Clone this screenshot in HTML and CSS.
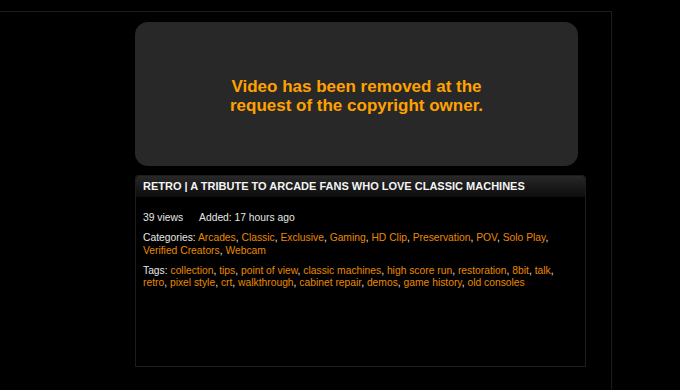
FILE: index.html
```html
<!DOCTYPE html>
<html>
<head>
<meta charset="utf-8">
<link rel="stylesheet" href="styles.css">
</head>
<body>
<div class="wrap">
  <div class="player">
    <p class="removed">Video has been removed at the<br>request of the copyright owner.</p>
  </div>
  <div class="panel">
    <div class="panel-head">RETRO | A TRIBUTE TO ARCADE FANS WHO LOVE CLASSIC MACHINES</div>
    <div class="panel-body">
      <p class="meta"><span>39 views</span><span>Added: 17 hours ago</span></p>
      <p class="line">Categories: <a href="#">Arcades</a>, <a href="#">Classic</a>, <a href="#">Exclusive</a>, <a href="#">Gaming</a>, <a href="#">HD Clip</a>, <a href="#">Preservation</a>, <a href="#">POV</a>, <a href="#">Solo Play</a>, <a href="#">Verified Creators</a>, <a href="#">Webcam</a></p>
      <p class="line">Tags: <a href="#">collection</a>, <a href="#">tips</a>, <a href="#">point of view</a>, <a href="#">classic machines</a>, <a href="#">high score run</a>, <a href="#">restoration</a>, <a href="#">8bit</a>, <a href="#">talk</a>, <a href="#">retro</a>, <a href="#">pixel style</a>, <a href="#">crt</a>, <a href="#">walkthrough</a>, <a href="#">cabinet repair</a>, <a href="#">demos</a>, <a href="#">game history</a>, <a href="#">old consoles</a></p>
    </div>
  </div>
</div>
</body>
</html>
```

FILE: styles.css
```css
html, body {
  margin: 0;
  padding: 0;
  background: #000;
}
body {
  height: 390px;
  font-family: "Liberation Sans", Arial, sans-serif;
  overflow: hidden;
}
.wrap {
  margin-top: 11px;
  width: 476px;
  height: 368px;
  padding: 10px 0 0 135px;
  border-top: 1px solid #1c1c1c;
  border-right: 1px solid #1c1c1c;
  display: flex;
  flex-direction: column;
  gap: 9px;
}
.player {
  width: 443px;
  height: 144px;
  flex: none;
  background: #282828;
  border-radius: 13px;
  display: flex;
  align-items: center;
  justify-content: center;
}
.removed {
  margin: 4px 0 0 0;
  color: #ffa200;
  font-weight: bold;
  font-size: 17px;
  line-height: 19px;
  text-align: center;
}
.panel {
  width: 449px;
  height: 190px;
  flex: none;
  border: 1px solid #1c1c1c;
  border-radius: 3px 3px 0 0;
  display: flex;
  flex-direction: column;
}
.panel-head {
  height: 21px;
  line-height: 21px;
  padding: 0 7px;
  background: linear-gradient(#282828, #0c0c0c);
  color: #f4f4f4;
  font-size: 11px;
  font-weight: bold;
  white-space: nowrap;
  border-radius: 3px 3px 0 0;
}
.panel-body {
  padding: 15px 8px 0 7px;
  color: #e6e6e6;
  font-size: 10.3px;
  line-height: 12.5px;
}
.panel-body p {
  margin: 0 0 7.5px 0;
}
.meta {
  display: flex;
  gap: 16px;
}
.line a {
  color: #e88a00;
  text-decoration: none;
}
```
